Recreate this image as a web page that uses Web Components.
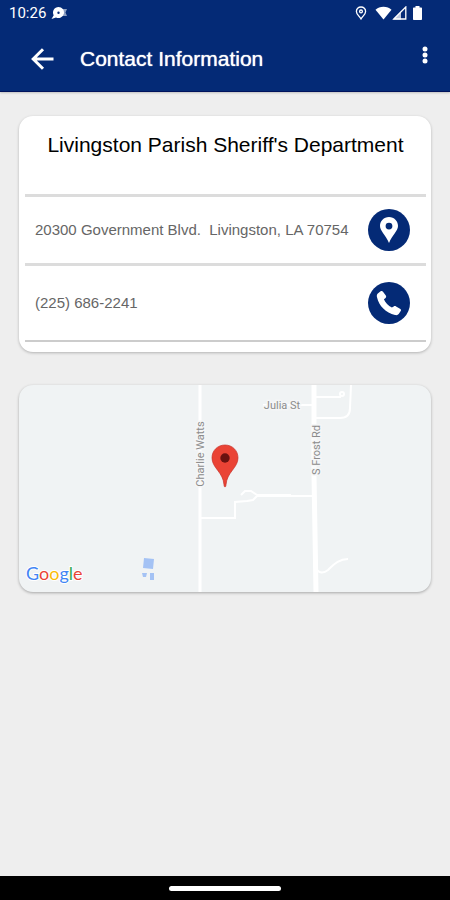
<!DOCTYPE html>
<html lang="en">
<head>
<meta charset="utf-8">
<meta name="viewport" content="width=device-width, initial-scale=1">
<title>Contact Information</title>
<style>
	html, body {
		margin: 0;
		min-height: 100%;
	}

	body {
		--brand: #042a76;
		--line: #dcdcdc;
		background-color: #eee;
		font-family: "Liberation Sans", Arial, sans-serif;
		color: #000;
	}
</style>
</head>
<body>

<contact-screen>
	<status-bar slot="top" time="10:26"></status-bar>
	<app-bar slot="top">Contact Information</app-bar>

	<info-card>
		<span slot="title">Livingston Parish Sheriff's Department</span>
		<contact-row label="Show on map">
			20300 Government Blvd.&nbsp; Livingston, LA 70754
			<svg slot="icon" viewBox="0 0 42 42" width="42" height="42">
				<path fill="#fff" fill-rule="evenodd" d="M21 8C15.800 8 12 12 12 17c0 5 5.500 8.500 9 17 3.500-8.500 9-12 9-17 0-5-3.800-9-9-9zm0 5.700a3.400 3.400 0 1 1 0 6.800 3.400 3.400 0 0 1 0-6.800z"/>
			</svg>
		</contact-row>
		<contact-row label="Call" tall>
			(225) 686-2241
			<svg slot="icon" viewBox="0 0 42 42" width="42" height="42">
				<path fill="#fff" d="M9.800 11.400 12.600 9.300c.9-.6 1.800-.5 2.400.4l2.800 3.900c.6.9.5 1.700-.2 2.300l-1.700 1.400c1.500 3.500 4.200 6.300 8 8.300l1.800-1.200c.8-.6 1.600-.5 2.400 0l3.900 2.300c1 .6 1.300 1.500.7 2.400l-1.800 2.700c-.8 1.200-2.200 1.600-3.900 1.200C17.800 30.800 11 24 9 15.200c-.4-1.600-.2-2.900.8-3.800z"/>
			</svg>
		</contact-row>
	</info-card>

	<map-card></map-card>

	<nav-handle slot="bottom"></nav-handle>
</contact-screen>

<script>
function makeTemplate(html) {
	const template = document.createElement('template')
	template.innerHTML = html
	return template
}

const screenTemplate = makeTemplate(`
	<style>
		:host {
			display: flex;
			flex-direction: column;
			min-height: 100vh;
		}

		header {
			background-color: var(--brand);
			border-bottom: 1px solid #00135c;
			box-shadow: 0 1px 2px rgba(0, 0, 0, 0.2);
		}

		main {
			flex: 1;
			display: flex;
			flex-direction: column;
			gap: 33px;
			padding: 24px 19px;
		}
	</style>

	<header><slot name="top"></slot></header>
	<main><slot></slot></main>
	<slot name="bottom"></slot>
`)

const statusTemplate = makeTemplate(`
	<style>
		:host {
			display: flex;
			align-items: center;
			height: 26px;
			padding: 0 28px 0 9px;
			color: #fff;
			font: 15px/26px Roboto, sans-serif;
		}

		svg {
			display: block;
		}

		.note {
			margin-left: 5px;
		}

		.icons {
			display: flex;
			align-items: center;
			margin-left: auto;
		}

		.pin {
			margin-right: 8px;
		}

		.signal {
			margin-right: 6px;
		}
	</style>

	<span class="time"></span>
	<svg class="note" width="16" height="14" viewBox="0 0 16 14" fill="#fff">
		<path fill-rule="evenodd" d="M7.500 1a5.500 5.500 0 1 1-2.500 10.400L.5 13l2.200-3.800A5.500 5.500 0 0 1 7.500 1zm0 4.500a1.200 1.200 0 1 0 0 2.400 1.200 1.200 0 0 0 0-2.400z"/>
		<path d="M11 3h5l-1.500 3.500L16 10h-5z" opacity=".55"/>
	</svg>
	<div class="icons">
		<svg class="pin" width="12" height="14" viewBox="0 0 12 14" fill="none" stroke="#fff" stroke-width="1.300">
			<path d="M6 1C3.300 1 1.400 3 1.400 5.400 1.400 8.300 4.200 10 6 13c1.800-3 4.600-4.700 4.600-7.600C10.600 3 8.700 1 6 1z"/>
			<circle cx="6" cy="5.400" r="1.400"/>
		</svg>
		<svg width="17" height="14" viewBox="0 0 17 14" fill="#fff">
			<path d="M8.500 13.500.5 3.800C2.500 1.800 5.300.8 8.500.8s6 1 8 3z"/>
		</svg>
		<svg class="signal" width="15" height="14" viewBox="0 0 15 14">
			<path d="M1.800 13 13.800 1v12z" fill="none" stroke="#fff" stroke-width="1.300"/>
			<path d="M1 13.500 9 5.600v7.900z" fill="#fff" opacity=".75"/>
		</svg>
		<svg width="9" height="14" viewBox="0 0 9 14" fill="#fff">
			<path d="M2.500 0h4v1.400H8c.6 0 1 .4 1 1V13c0 .6-.4 1-1 1H1c-.6 0-1-.4-1-1V2.400c0-.6.4-1 1-1h1.500z"/>
		</svg>
	</div>
`)

const appBarTemplate = makeTemplate(`
	<style>
		:host {
			display: flex;
			align-items: center;
			height: 65px;
			padding: 0 13px 0 30px;
			color: #fff;
		}

		h1 {
			flex: 1;
			margin: 0 0 0 26px;
			font-size: 21px;
			line-height: 24px;
			font-weight: normal;
			text-shadow: 0 0 1px #fff;
		}

		button {
			display: block;
			padding: 0;
			border: 0;
			background: none;
			color: inherit;
		}

		.more {
			align-self: flex-start;
			padding-top: 18px;
		}

		svg {
			display: block;
		}
	</style>

	<button aria-label="Back">
		<svg width="24" height="24" viewBox="0 0 24 24" fill="none" stroke="#fff" stroke-width="3">
			<path d="M23.500 12H3.500M13 2.200 3.200 12l9.800 9.800"/>
		</svg>
	</button>
	<h1><slot></slot></h1>
	<button class="more" aria-label="More options">
		<svg width="24" height="22" viewBox="0 0 24 22" fill="#fff">
			<circle cx="12" cy="5" r="2.500"/>
			<circle cx="12" cy="11" r="2.500"/>
			<circle cx="12" cy="17" r="2.500"/>
		</svg>
	</button>
`)

const infoTemplate = makeTemplate(`
	<style>
		:host {
			display: block;
			padding: 0 5px 10px 6px;
			border-radius: 14px;
			background-color: #fff;
			box-shadow: 0 1px 3px rgba(0, 0, 0, 0.25);
		}

		h2 {
			margin: 0;
			padding: 16px 0 36px;
			border-bottom: 3px solid var(--line);
			font-size: 21px;
			line-height: 26px;
			font-weight: normal;
			text-align: center;
		}
	</style>

	<h2><slot name="title"></slot></h2>
	<slot></slot>
`)

const rowTemplate = makeTemplate(`
	<style>
		:host {
			display: flex;
			align-items: center;
			justify-content: space-between;
			height: 66px;
			padding: 0 16px 0 10px;
			border-bottom: 3px solid var(--line);
			font-size: 15px;
			line-height: 20px;
			color: #666;
		}

		:host([tall]) {
			height: 74px;
			border-bottom: 2px solid #ccc;
		}

		button {
			flex: none;
			width: 42px;
			height: 42px;
			padding: 0;
			border: 0;
			border-radius: 50%;
			background-color: var(--brand);
		}

		::slotted(svg) {
			display: block;
		}
	</style>

	<span><slot></slot></span>
	<button><slot name="icon"></slot></button>
`)

const mapTemplate = makeTemplate(`
	<style>
		:host {
			display: block;
			overflow: hidden;
			border-radius: 14px;
			background-color: #f0f3f4;
			box-shadow: 0 1px 3px rgba(0, 0, 0, 0.3);
		}

		svg {
			display: block;
			width: 100%;
		}

		.road {
			fill: none;
			stroke: #fff;
			stroke-width: 2;
		}

		.label {
			font: 11px Roboto, sans-serif;
			fill: #8c8c8c;
			stroke: #f5f6f7;
			stroke-width: 3;
			paint-order: stroke;
			text-anchor: middle;
		}

		.logo {
			font: 18px Lato, sans-serif;
			stroke: #fff;
			stroke-width: 2;
			paint-order: stroke;
		}
	</style>

	<svg viewBox="0 0 412 207" role="img" aria-label="Map">
		<g class="road">
			<path d="M181 0v207" stroke-width="3"/>
			<path d="M295 0v90l2 117" stroke-width="5"/>
			<path d="M181 133h35v-16l12-1 6-1 4-4h57M222 110l4-4h6l6 4h34"/>
			<path d="M244 20h51M297 12h25M297 33h24c6 0 10-3 10-10l1-23"/>
			<circle cx="323" cy="9" r="2"/>
			<path d="M297 182c1 6 7 7 12 3 7-7 12-11 20-11"/>
		</g>

		<!-- buildings -->
		<path fill="#a4c2f4" d="m125 173 10 1-1 10-10-1zM123 188h5l-1 4h-3zM131 188h4v7h-4z"/>

		<text class="label" x="263" y="24">Julia St</text>
		<text class="label" transform="translate(185 69) rotate(-90)">Charlie Watts</text>
		<text class="label" transform="translate(301 65) rotate(-90)">S Frost Rd</text>

		<!-- marker -->
		<path fill="#ea4335" stroke="#c5302a" stroke-width=".7" d="M206 60c-7.500 0-13 5.700-13 12.800 0 5 2.600 8.500 5.600 12.400 3.400 4.500 5.900 8.500 6.400 14.500.1 3 1.900 3 2 0 .5-6 3-10 6.400-14.500 3-3.900 5.600-7.400 5.600-12.400C219 65.700 213.500 60 206 60z"/>
		<circle cx="206" cy="73" r="4.700" fill="#6b1210"/>

		<text class="logo" x="7" y="195"><tspan fill="#4285f4">G</tspan><tspan fill="#ea4335">o</tspan><tspan fill="#fbbc05">o</tspan><tspan fill="#4285f4">g</tspan><tspan fill="#34a853">l</tspan><tspan fill="#ea4335">e</tspan></text>
	</svg>
`)

const navTemplate = makeTemplate(`
	<style>
		:host {
			display: flex;
			align-items: center;
			justify-content: center;
			height: 24px;
			background-color: #000;
		}

		div {
			width: 25%;
			height: 5px;
			border-radius: 3px;
			background-color: #fff;
		}
	</style>

	<div></div>
`)

class BaseElement extends HTMLElement {
	constructor(template) {
		super()
		this._shadowRoot = this.attachShadow({ mode: 'open' })
		this._shadowRoot.appendChild(template.content.cloneNode(true))
	}
}

class ContactScreen extends BaseElement {
	constructor() {
		super(screenTemplate)
	}
}

class StatusBar extends BaseElement {
	constructor() {
		super(statusTemplate)
	}

	connectedCallback() {
		this._shadowRoot.querySelector('.time').textContent = this.getAttribute('time')
	}
}

class AppBar extends BaseElement {
	constructor() {
		super(appBarTemplate)
	}
}

class InfoCard extends BaseElement {
	constructor() {
		super(infoTemplate)
	}
}

class ContactRow extends BaseElement {
	constructor() {
		super(rowTemplate)
	}

	connectedCallback() {
		this._shadowRoot.querySelector('button').setAttribute('aria-label', this.getAttribute('label'))
	}
}

class MapCard extends BaseElement {
	constructor() {
		super(mapTemplate)
	}
}

class NavHandle extends BaseElement {
	constructor() {
		super(navTemplate)
	}
}

customElements.define('contact-screen', ContactScreen)
customElements.define('status-bar', StatusBar)
customElements.define('app-bar', AppBar)
customElements.define('info-card', InfoCard)
customElements.define('contact-row', ContactRow)
customElements.define('map-card', MapCard)
customElements.define('nav-handle', NavHandle)
</script>
</body>
</html>
